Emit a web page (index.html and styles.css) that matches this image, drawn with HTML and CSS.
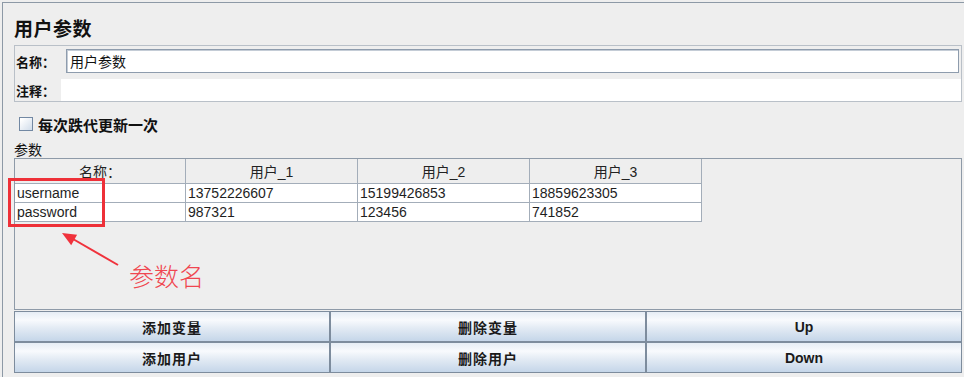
FILE: index.html
```html
<!DOCTYPE html>
<html lang="zh-CN">
<head>
  <meta charset="UTF-8" />
  <title>用户参数</title>
  <link rel="stylesheet" href="styles.css">
</head>
<body>
  <div class="window">
    <h1 class="title">用户参数</h1>

    <div class="name-panel">
      <div class="field-row">
        <label class="field-label name-label">名称：</label>
        <input class="field-input" type="text" value="用户参数" />
      </div>
      <div class="field-row">
        <label class="field-label comment-label">注释：</label>
        <div class="comment-area"></div>
      </div>
    </div>

    <label class="check-row"><span class="checkbox"></span>每次跌代更新一次</label>

    <div class="section-label">参数</div>

    <div class="table-panel">
      <table class="params">
        <thead>
          <tr>
            <th>名称：</th>
            <th>用户_1</th>
            <th>用户_2</th>
            <th>用户_3</th>
          </tr>
        </thead>
        <tbody>
          <tr>
            <td>username</td>
            <td>13752226607</td>
            <td>15199426853</td>
            <td>18859623305</td>
          </tr>
          <tr>
            <td>password</td>
            <td>987321</td>
            <td>123456</td>
            <td>741852</td>
          </tr>
        </tbody>
      </table>
    </div>

    <div class="buttons">
      <button class="btn cjk">添加变量</button>
      <button class="btn cjk">删除变量</button>
      <button class="btn">Up</button>
      <button class="btn cjk">添加用户</button>
      <button class="btn cjk">删除用户</button>
      <button class="btn">Down</button>
    </div>
  </div>

  <!-- annotation drawn over the screenshot -->
  <div class="mark-box"></div>
  <svg class="mark-arrow" width="70" height="42" viewBox="0 0 70 42">
    <line x1="18" y1="11" x2="63" y2="37" stroke="#f0323c" stroke-width="2" />
    <polygon points="7,5 22.1,6.7 16.2,17.2" fill="#f0323c" />
  </svg>
  <div class="mark-text">参数名</div>
</body>
</html>
```

FILE: styles.css
```css
* {
  box-sizing: border-box;
}

body {
  margin: 0;
  background-color: #eeeeee;
  color: #1e1e1e;
  font-family: "Liberation Sans", "Noto Sans CJK SC", sans-serif;
  position: relative;
  height: 377px;
  overflow: hidden;
}

.window {
  margin: 2px 0 0 2px;
  border-top: 1px solid #8d99a6;
  border-left: 1px solid #8d99a6;
  padding: 0 2px 0 11px;
  height: 375px;
}

.title {
  margin: 13px 0 5px;
  font-family: "Noto Sans CJK SC", sans-serif;
  font-size: 19px;
  font-weight: bold;
  line-height: 24px;
  letter-spacing: 0.5px;
  color: #111;
}

.name-panel {
  border: 1px solid #b9c0c8;
  padding: 3px 0 0;
  height: 57px;
}

.field-row {
  display: flex;
  align-items: center;
}

.field-row + .field-row {
  margin-top: 6px;
}

.field-label {
  padding-left: 1px;
  font-family: "Noto Sans CJK SC", sans-serif;
  font-size: 13px;
  font-weight: bold;
  color: #111;
}

.name-label {
  width: 51px;
}

.comment-label {
  width: 46px;
}

.field-input {
  flex: 1;
  height: 24px;
  margin: 0 2px 0 0;
  padding: 0 3px;
  border: 1px solid #8e9cad;
  box-shadow: inset 1px 1px 0 #c4ccd6;
  background: #ffffff;
  font-family: "Noto Sans CJK SC", sans-serif;
  font-size: 14px;
  color: #111;
  outline: none;
}

.comment-area {
  flex: 1;
  height: 22px;
  background: #ffffff;
}

.check-row {
  display: flex;
  align-items: center;
  gap: 5px;
  height: 20px;
  margin-top: 12px;
  padding-left: 5px;
  font-family: "Noto Sans CJK SC", sans-serif;
  font-size: 15px;
  font-weight: bold;
  color: #111;
}

.checkbox {
  width: 14px;
  height: 14px;
  border: 1px solid #7288a3;
  background: linear-gradient(135deg, #ffffff 10%, #d0dcea);
}

.section-label {
  margin-top: 7px;
  font-family: "Noto Sans CJK SC", sans-serif;
  font-size: 14px;
  line-height: 17px;
  color: #111;
}

.table-panel {
  border: 1px solid #8e9aa8;
  height: 152px;
}

.params {
  border-collapse: separate;
  border-spacing: 0;
  font-size: 14px;
}

.params th,
.params td {
  width: 172px;
  padding: 0 2px;
  border-right: 1px solid #a3adb9;
  border-bottom: 1px solid #a3adb9;
  white-space: nowrap;
}

.params th:first-child,
.params td:first-child {
  width: 171px;
}

.params th {
  height: 25px;
  background: #eeeeee;
  font-weight: normal;
  text-align: center;
  color: #222;
}

.params td {
  height: 19px;
  line-height: 17px;
  background: #ffffff;
  text-align: left;
  color: #1e1e1e;
}

.buttons {
  display: grid;
  grid-template-columns: repeat(3, 1fr);
  grid-auto-rows: 31px;
  margin-top: 1px;
}

.btn {
  margin: 0;
  border: 1px solid #7d8c9d;
  background: linear-gradient(to bottom, #e6edf5 0%, #f8fafd 28%, #e3ebf4 55%, #c5d6e9 100%);
  font-family: "Liberation Sans", "Noto Sans CJK SC", sans-serif;
  font-size: 14px;
  font-weight: bold;
  color: #1a1a1a;
  padding: 0;
}

.btn.cjk {
  font-family: "Noto Sans CJK SC", sans-serif;
  font-size: 14px;
  letter-spacing: 1px;
}

.mark-box {
  position: absolute;
  left: 8px;
  top: 178px;
  width: 97px;
  height: 49px;
  border: 3px solid #ee3038;
}

.mark-arrow {
  position: absolute;
  left: 55px;
  top: 228px;
}

.mark-text {
  position: absolute;
  left: 129px;
  top: 258px;
  font-family: "Noto Sans CJK SC", sans-serif;
  font-size: 25px;
  line-height: 34px;
  font-weight: 300;
  color: #f04650;
}
```
